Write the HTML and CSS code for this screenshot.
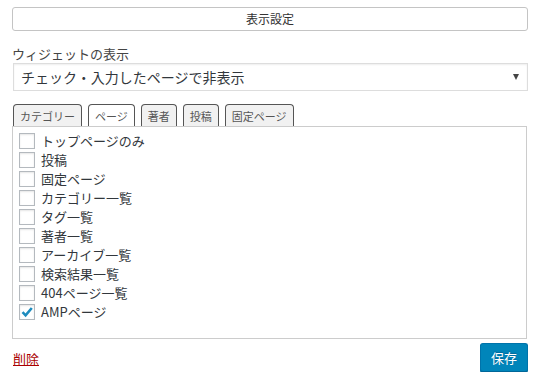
FILE: index.html
```html
<!DOCTYPE html>
<html lang="ja">
<head>
	<meta charset="UTF-8">
	<meta name="viewport" content="width=device-width, initial-scale=1.0">
	<link rel="stylesheet" href="styles.css">
	<title>表示設定</title>
</head>
<body>
	<div class="wrap">
		<button class="toggle" type="button">表示設定</button>
		<label class="lbl">ウィジェットの表示</label>
		<div class="select">
			<span>チェック・入力したページで非表示</span>
			<span class="arrow"></span>
		</div>
		<div class="tabs">
			<span class="tab">カテゴリー</span>
			<span class="tab active">ページ</span>
			<span class="tab">著者</span>
			<span class="tab">投稿</span>
			<span class="tab">固定ページ</span>
		</div>
		<div class="panel">
			<label class="row"><span class="cb"></span>トップページのみ</label>
			<label class="row"><span class="cb"></span>投稿</label>
			<label class="row"><span class="cb"></span>固定ページ</label>
			<label class="row"><span class="cb"></span>カテゴリー一覧</label>
			<label class="row"><span class="cb"></span>タグ一覧</label>
			<label class="row"><span class="cb"></span>著者一覧</label>
			<label class="row"><span class="cb"></span>アーカイブ一覧</label>
			<label class="row"><span class="cb"></span>検索結果一覧</label>
			<label class="row"><span class="cb"></span>404ページ一覧</label>
			<label class="row"><span class="cb on"><svg viewBox="0 0 16 16" width="16" height="16"><path d="M3.5 8.2 L6.6 11.3 L12.8 4" fill="none" stroke="#1e8cbe" stroke-width="2.6"/></svg></span>AMPページ</label>
		</div>
		<div class="foot">
			<a class="del" href="#">削除</a>
			<button class="save" type="button">保存</button>
		</div>
	</div>
</body>
</html>
```

FILE: styles.css
```css
body{
	margin:0;
	background:#fff;
	color:#32373c;
	font-family:"Noto Sans CJK JP","Noto Sans",sans-serif;
}
.wrap{
	display:flex;
	flex-direction:column;
	padding:7px 14px 0 12px;
}
.toggle{
	height:24px;
	margin:0;
	padding:0;
	border:1px solid #c4c4c4;
	border-radius:3px;
	background:#fff;
	color:#333;
	font-family:inherit;
	font-size:12px;
	line-height:22px;
}
.lbl{
	margin-top:14px;
	font-size:13px;
	line-height:18px;
	color:#444;
}
.select{
	display:flex;
	justify-content:space-between;
	align-items:center;
	height:26px;
	margin-left:1px;
	padding:0 8px 0 7px;
	border:1px solid #ddd;
	box-shadow:inset 0 1px 2px rgba(0,0,0,.07);
	font-size:14px;
	color:#32373c;
}
.arrow{
	width:0;
	height:0;
	border-left:3px solid transparent;
	border-right:3px solid transparent;
	border-top:6px solid #444;
}
.tabs{
	display:flex;
	gap:6px;
	margin-top:13px;
	padding-left:1px;
	height:23px;
}
.tab{
	display:flex;
	align-items:center;
	padding:0 6px;
	border:1px solid #555;
	border-bottom:none;
	border-radius:4px 4px 0 0;
	background:#f1f1f1;
	font-size:11px;
	color:#555;
}
.tab.active{
	background:#fff;
}
.panel{
	display:flex;
	flex-direction:column;
	height:199px;
	padding:4px 0 8px 6px;
	margin-right:1px;
	border:1px solid #ccc;
	margin-top:-1px;
}
.row{
	display:flex;
	align-items:center;
	gap:6px;
	height:19px;
	font-size:13px;
	color:#32373c;
}
.cb{
	display:flex;
	width:14px;
	height:14px;
	border:1px solid #b4b9be;
	box-shadow:inset 0 1px 2px rgba(0,0,0,.1);
	background:#fff;
}
.cb svg{
	margin:-1px;
}
.foot{
	display:flex;
	justify-content:space-between;
	align-items:flex-start;
	margin-top:4px;
}
.del{
	margin-top:6px;
	margin-left:1px;
	font-size:13px;
	color:#a00;
	text-decoration:underline;
}
.save{
	width:48px;
	height:29px;
	padding:0;
	border:1px solid #0073aa;
	border-bottom-color:#006799;
	border-radius:3px;
	background:#0085ba;
	box-shadow:0 1px 0 #006799;
	color:#fff;
	font-family:inherit;
	font-size:13px;
	text-shadow:0 -1px 1px #006799;
}
```
